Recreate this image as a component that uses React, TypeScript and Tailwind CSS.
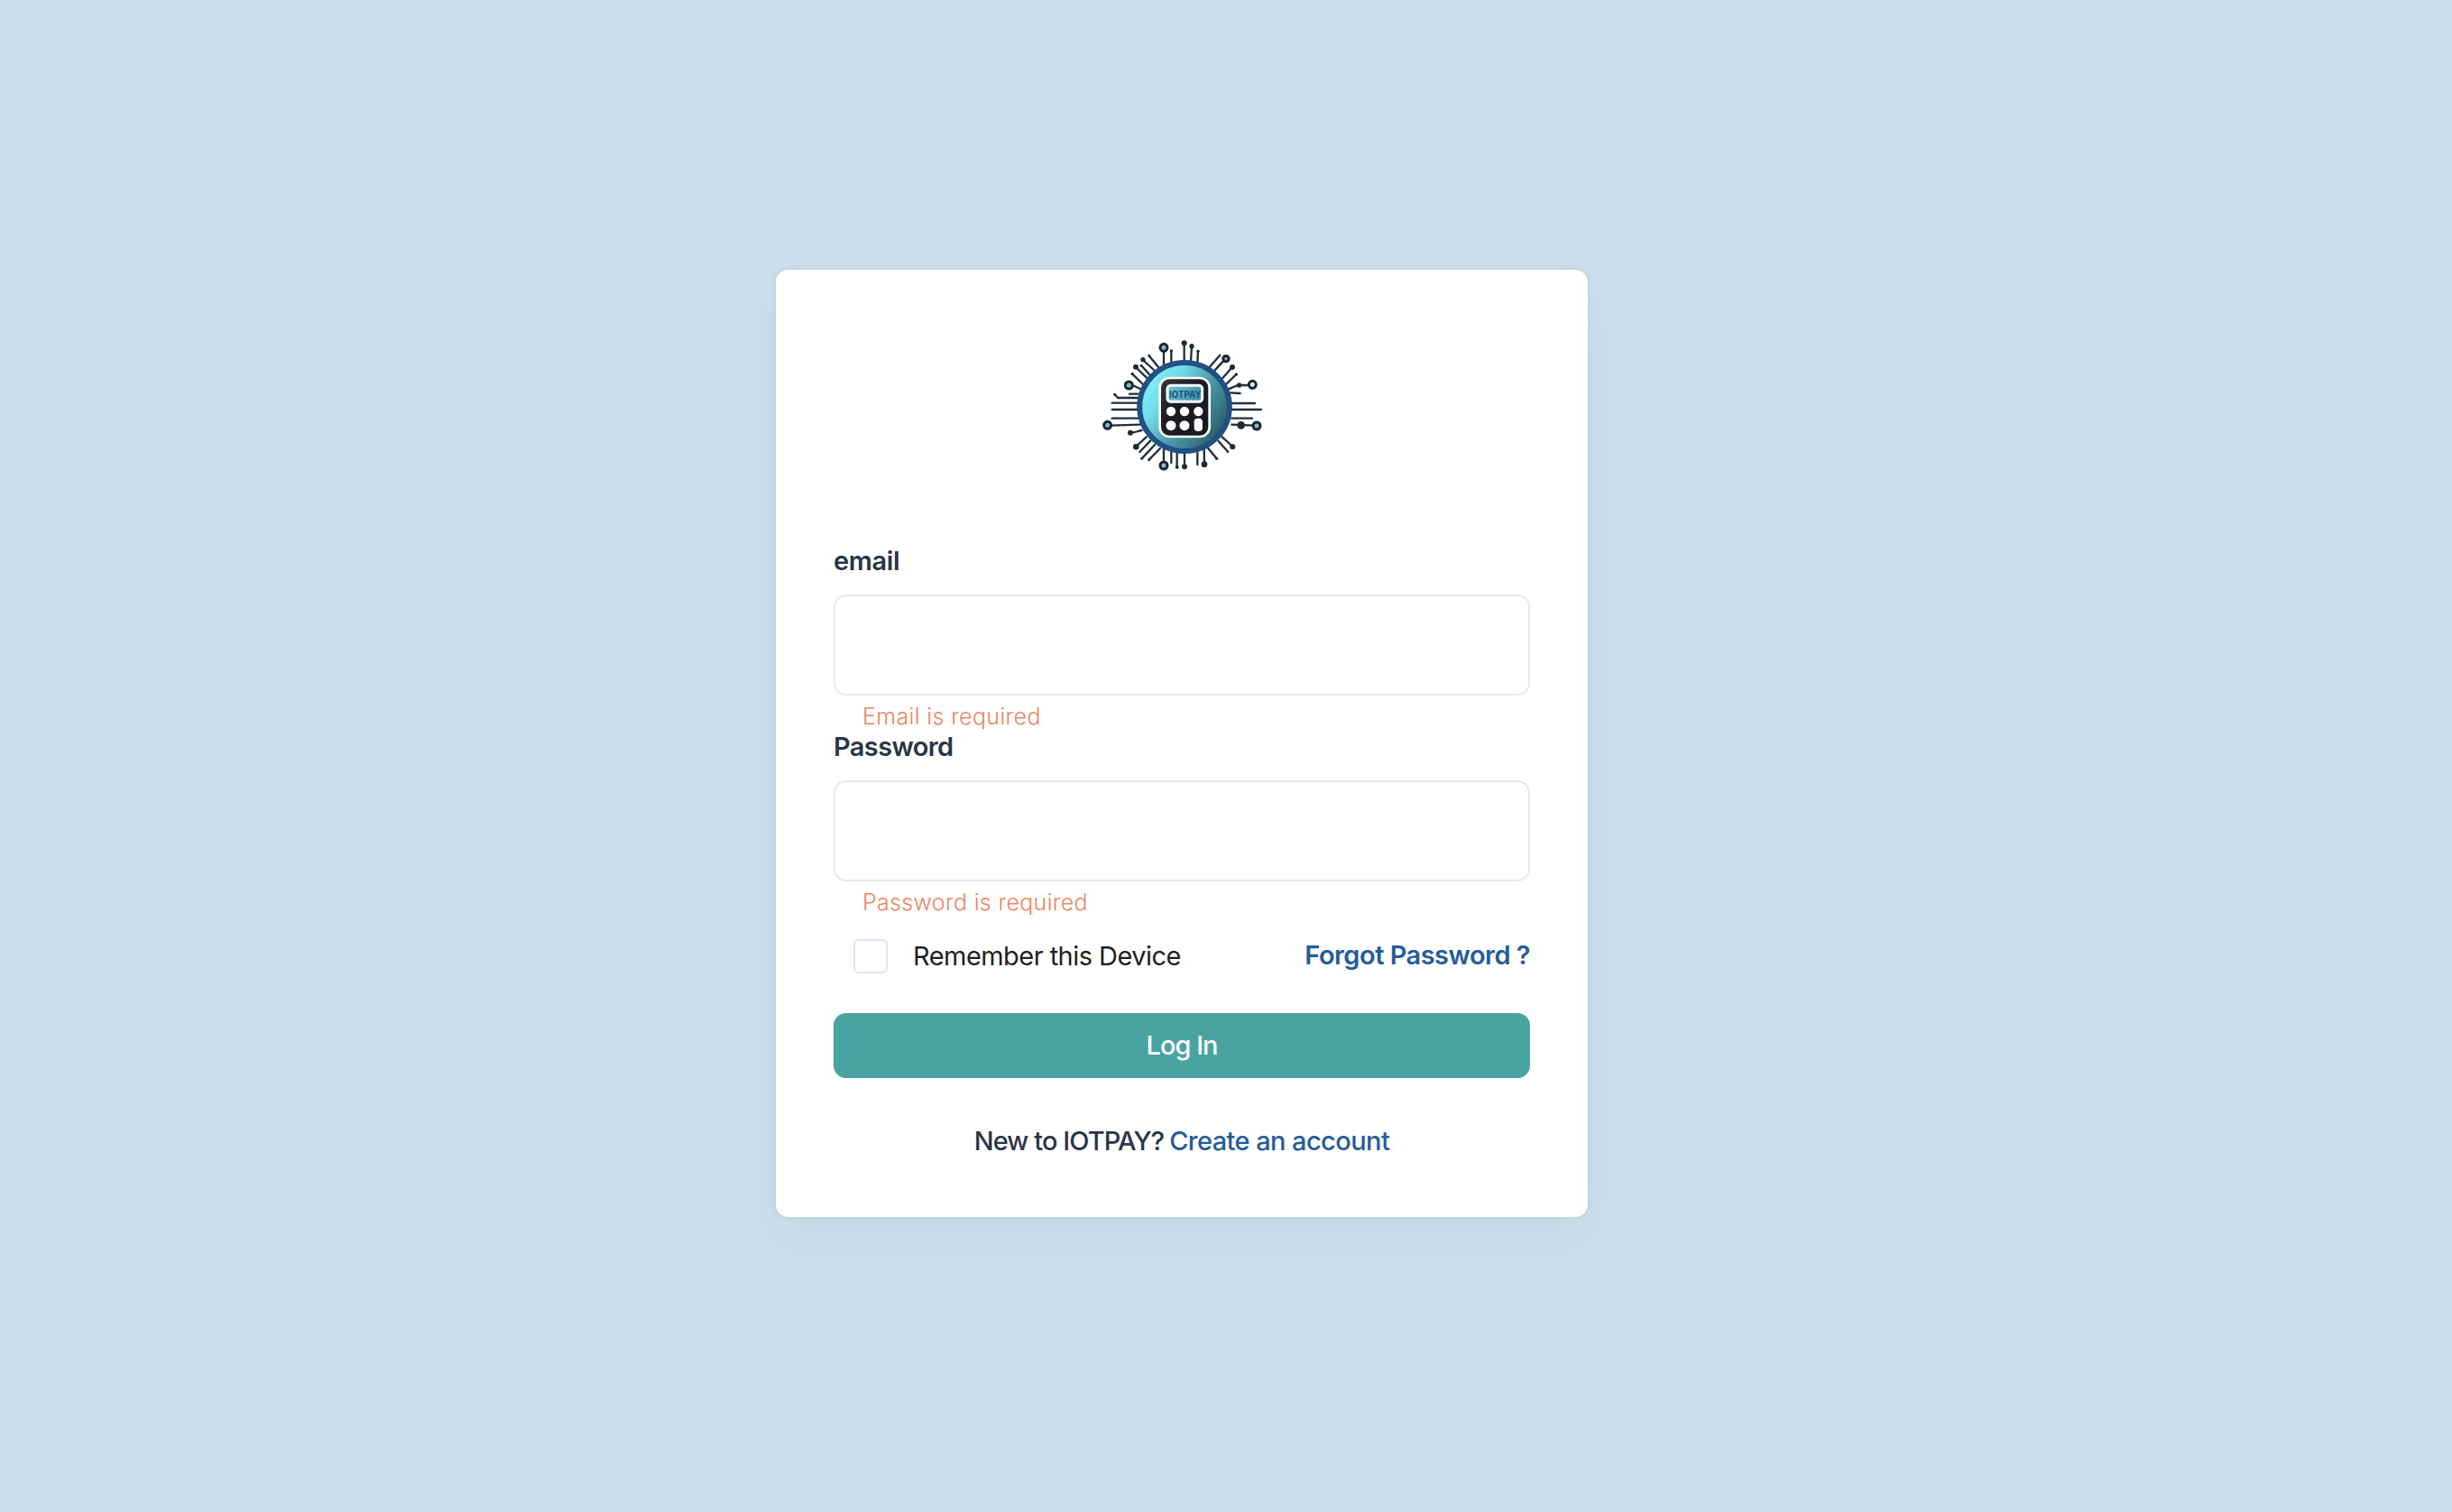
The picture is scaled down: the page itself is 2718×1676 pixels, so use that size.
import React from "react";

const INK = "#1f2f3d";

/* Circuit traces radiating from the badge. */
const TRACES = [
  "M240 74V122", "M265 72V112", "M308 50V104", "M333 58L330 106", "M354 72L352 112",
  "M191 88L224 128", "M171 102L210 138", "M165 120L196 154", "M147 126L186 164", "M135 148L174 186",
  "M136 186L162 198", "M76 216L88 228H158", "M126 215H158", "M68 245H154", "M68 267H154", "M68 296H154",
  "M66 320L162 317", "M130 344C144 344 150 340 166 336", "M148 390L182 358", "M160 408L196 370",
  "M167 430L210 384", "M191 434L228 396", "M240 440V398", "M265 444V404", "M284 456V406", "M309 456V408",
  "M352 450V404", "M375 446L374 400", "M416 430L386 394", "M454 408L422 372", "M469 390L434 358",
  "M466 317L540 320", "M466 296H534", "M466 267H564", "M466 246H543", "M462 211L494 213",
  "M456 198C470 196 476 186 492 186H520", "M481 150L446 184", "M468 126L436 162", "M440 104L410 136", "M427 86L392 126",
];

const DOTS = [
  [308, 46, 9], [333, 56, 8], [265, 72, 5], [354, 73, 5], [171, 101, 8], [147, 125, 9], [191, 88, 4], [165, 121, 4],
  [136, 148, 5], [129, 344, 9], [148, 391, 10], [167, 430, 4], [191, 434, 4], [284, 458, 6], [309, 457, 9], [375, 449, 10],
  [416, 430, 5], [469, 391, 9], [497, 319, 13], [491, 186, 8], [481, 150, 5], [468, 126, 9], [77, 217, 4],
];

const RINGS = [
  [240, 61], [124, 186], [53, 319], [240, 453], [549, 321], [535, 184], [447, 98],
];

function Logo() {
  return (
    <svg viewBox="0 0 600 510" className="h-[170px] w-[200px]" role="img" aria-label="IOTPAY">
      <defs>
        <linearGradient id="disc" x1="0.08" y1="0.22" x2="0.92" y2="0.78">
          <stop offset="0" stopColor="#80eefa" />
          <stop offset="0.25" stopColor="#70dbe8" />
          <stop offset="0.55" stopColor="#4d9fab" />
          <stop offset="0.85" stopColor="#387580" />
          <stop offset="1" stopColor="#2b5964" />
        </linearGradient>
        <linearGradient id="screen" x1="0" y1="0" x2="1" y2="0.3">
          <stop offset="0" stopColor="#6cc6d6" />
          <stop offset="1" stopColor="#4595a6" />
        </linearGradient>
        <linearGradient id="body" x1="0" y1="0" x2="1" y2="1">
          <stop offset="0" stopColor="#38383b" />
          <stop offset="0.4" stopColor="#1b1d22" />
          <stop offset="1" stopColor="#17191f" />
        </linearGradient>
      </defs>
      <g fill="none" stroke={INK} strokeWidth="7" strokeLinecap="round">
        {TRACES.map((d) => (
          <path key={d} d={d} />
        ))}
      </g>
      {DOTS.map(([x, y, r]) => (
        <circle key={`${x}-${y}`} cx={x} cy={y} r={r} fill="#1b2a35" />
      ))}
      {RINGS.map(([x, y], i) => (
        <circle
          key={`${x}-${y}`}
          cx={x}
          cy={y}
          r={i === 6 ? 9.5 : 12}
          fill={i === 5 ? "#e8f1f3" : "#8cb9c3"}
          stroke="#182630"
          strokeWidth="9"
        />
      ))}
      <ellipse cx="309" cy="258" rx="149.5" ry="147" fill="url(#disc)" stroke="#215083" strokeWidth="18" />
      <rect x="227" y="162" width="165" height="195" rx="32" fill="url(#body)" stroke="#ffffff" strokeWidth="8" />
      <rect x="252" y="187" width="116" height="54" rx="11" fill="url(#screen)" stroke="#ffffff" strokeWidth="9" />
      <text
        x="258"
        y="228"
        fontFamily="Inter, sans-serif"
        fontSize="33"
        fontWeight="700"
        textLength="107"
        lengthAdjust="spacingAndGlyphs"
        fill="#1f4f80"
      >
        IOTPAY
      </text>
      <g fill="#ffffff">
        <circle cx="264" cy="273" r="15.5" />
        <circle cx="309" cy="273" r="15.5" />
        <circle cx="355" cy="273" r="15.5" />
        <circle cx="264" cy="320" r="16.5" />
        <circle cx="309" cy="320" r="16.5" />
        <rect x="341" y="296" width="28" height="43" rx="12" />
      </g>
    </svg>
  );
}

export default function App() {
  return (
    <div className="flex h-[1676px] w-full items-start bg-[#cadeeb] pt-[299px] pl-[860px] font-[Inter,sans-serif]">
      <form className="flex w-[900px] flex-col rounded-[14px] bg-white px-16 pt-[66px] pb-16 shadow-[0_0_4px_rgba(145,158,171,0.3),0_24px_48px_-8px_rgba(145,158,171,0.1)]">
        <div className="flex justify-center">
          <Logo />
        </div>

        <label htmlFor="email" className="mt-[66px] text-[29px] leading-[41px] font-semibold tracking-[-0.38px] text-[#2a3547]">
          email
        </label>
        <input id="email" type="text" className="mt-[17px] h-28 rounded-[14px] border-2 border-[#e5eaef] px-7 text-[29px] outline-none" />
        <p className="mt-2.5 pl-8 text-[25px] leading-[26px] font-light tracking-[0.36px] text-[#ec8564]">Email is required</p>

        <label htmlFor="password" className="text-[29px] leading-[41px] font-semibold tracking-[-0.63px] text-[#2a3547]">
          Password
        </label>
        <input id="password" type="password" className="mt-[17px] h-28 rounded-[14px] border-2 border-[#e5eaef] px-7 text-[29px] outline-none" />
        <p className="mt-2.5 pl-8 text-[25px] leading-[26px] font-light tracking-[0.34px] text-[#ec8564]">Password is required</p>

        <div className="mt-7 flex h-[38px] items-center justify-between">
          <label className="flex items-center pl-[22px]">
            <input type="checkbox" className="size-[38px] appearance-none rounded-[6px] border-2 border-[#dfe5ef]" />
            <span className="ml-7 text-[29px] leading-[38px] tracking-[-0.55px] text-[#1f1f1f]">Remember this Device</span>
          </label>
          <a href="#" className="-mt-[2px] text-[29px] leading-9 font-semibold tracking-[-0.52px] text-[#255d99]">
            Forgot Password ?
          </a>
        </div>

        <button type="button" className="mt-11 h-[72px] rounded-[14px] bg-[#49a3a1] text-[29px] leading-[72px] font-medium tracking-[-1px] text-white">
          Log In
        </button>

        <div className="mt-[49px] flex justify-center gap-1.5 text-[29px] leading-[41px] font-medium">
          <span className="tracking-[-0.94px] text-[#2a3547]">New to IOTPAY?</span>
          <a href="#" className="tracking-[-0.58px] text-[#255d99]">
            Create an account
          </a>
        </div>
      </form>
    </div>
  );
}
